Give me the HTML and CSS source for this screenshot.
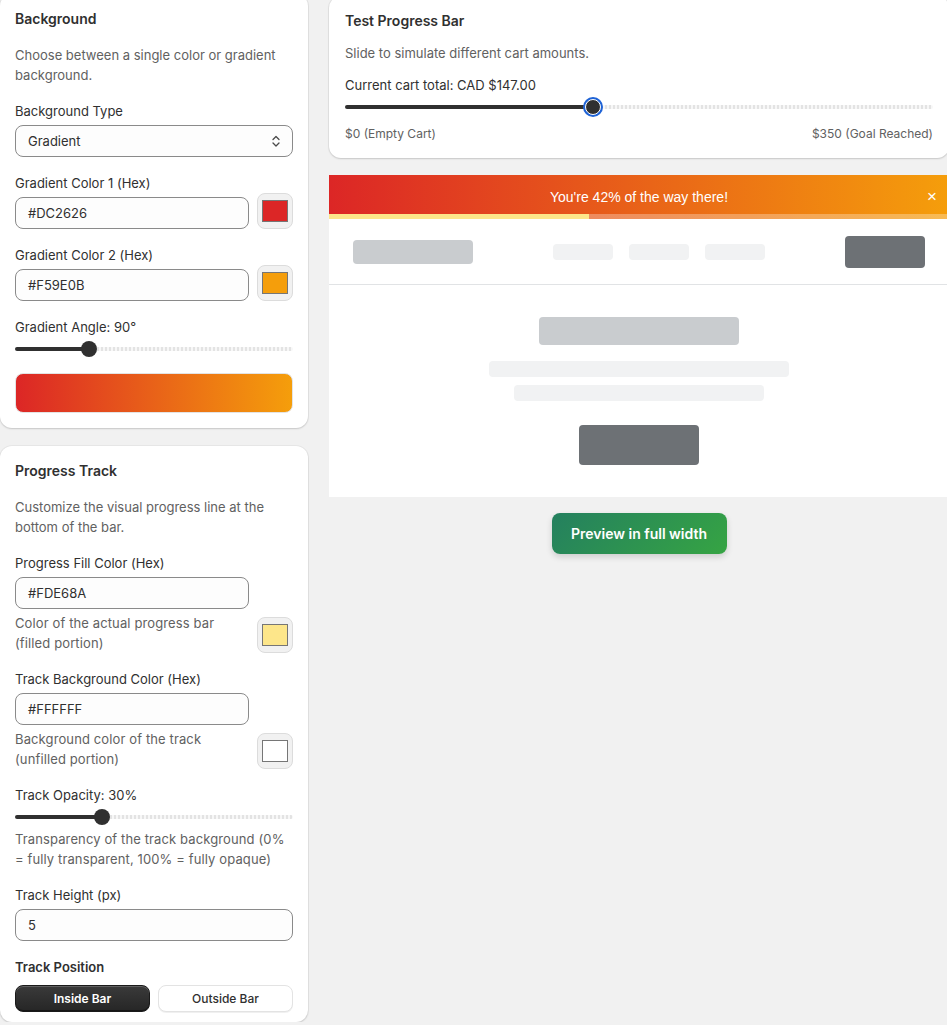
FILE: index.html
```html
<!DOCTYPE html>
<html lang="en">
<head>
<meta charset="utf-8">
<title>Progress Bar Settings</title>
<link rel="stylesheet" href="styles.css">
</head>
<body>
<div class="layout">
  <div class="col-left">
    <section class="card">
      <h2 class="card-title">Background</h2>
      <p class="desc">Choose between a single color or gradient background.</p>
      <div class="field">
        <div class="label">Background Type</div>
        <div class="select">
          <span>Gradient</span>
          <svg class="select-icon" width="16" height="16" viewBox="0 0 16 16" aria-hidden="true"><polyline points="5,6.5 8,3.5 11,6.5" fill="none" stroke="#4a4a4a" stroke-width="1.3" stroke-linecap="round" stroke-linejoin="round"/><polyline points="5,10 8,13 11,10" fill="none" stroke="#4a4a4a" stroke-width="1.3" stroke-linecap="round" stroke-linejoin="round"/></svg>
        </div>
      </div>
      <div class="field-row">
        <div class="field-main">
          <div class="label">Gradient Color 1 (Hex)</div>
          <div class="input">#DC2626</div>
        </div>
        <div class="swatch"><span class="swatch-color" style="--c:#DC2626"></span></div>
      </div>
      <div class="field-row">
        <div class="field-main">
          <div class="label">Gradient Color 2 (Hex)</div>
          <div class="input">#F59E0B</div>
        </div>
        <div class="swatch"><span class="swatch-color" style="--c:#F59E0B"></span></div>
      </div>
      <div class="field">
        <div class="label">Gradient Angle: 90°</div>
        <div class="range" style="--p:0.25">
          <div class="range-fill"></div>
          <div class="range-thumb"></div>
          <div class="range-rest"></div>
        </div>
      </div>
      <div class="gradient-preview"></div>
    </section>

    <section class="card card-2">
      <h2 class="card-title">Progress Track</h2>
      <p class="desc">Customize the visual progress line at the bottom of the bar.</p>
      <div class="field-row">
        <div class="field-main">
          <div class="label">Progress Fill Color (Hex)</div>
          <div class="input">#FDE68A</div>
          <div class="help">Color of the actual progress bar (filled portion)</div>
        </div>
        <div class="swatch"><span class="swatch-color" style="--c:#FDE68A"></span></div>
      </div>
      <div class="field-row">
        <div class="field-main">
          <div class="label">Track Background Color (Hex)</div>
          <div class="input">#FFFFFF</div>
          <div class="help">Background color of the track (unfilled portion)</div>
        </div>
        <div class="swatch"><span class="swatch-color" style="--c:#FFFFFF"></span></div>
      </div>
      <div class="field">
        <div class="label">Track Opacity: 30%</div>
        <div class="range" style="--p:0.3">
          <div class="range-fill"></div>
          <div class="range-thumb"></div>
          <div class="range-rest"></div>
        </div>
        <div class="help">Transparency of the track background (0% = fully transparent, 100% = fully opaque)</div>
      </div>
      <div class="field">
        <div class="label">Track Height (px)</div>
        <div class="input">5</div>
      </div>
      <div class="field field-buttons">
        <div class="label label-strong">Track Position</div>
        <div class="btn-group">
          <button class="btn btn-dark" type="button">Inside Bar</button>
          <button class="btn btn-light" type="button">Outside Bar</button>
        </div>
      </div>
    </section>
  </div>

  <div class="col-right">
    <section class="card test-card">
      <h2 class="card-title">Test Progress Bar</h2>
      <p class="desc">Slide to simulate different cart amounts.</p>
      <div class="label cart-label">Current cart total: CAD $147.00</div>
      <div class="range range-focus" style="--p:0.42">
        <div class="range-fill"></div>
        <div class="range-thumb"></div>
        <div class="range-rest"></div>
      </div>
      <div class="range-labels">
        <span>$0 (Empty Cart)</span>
        <span>$350 (Goal Reached)</span>
      </div>
    </section>

    <div class="preview">
      <div class="announce">
        <span class="announce-text">You're 42% of the way there!</span>
        <span class="announce-close">×</span>
        <div class="announce-track"><div class="announce-fill" style="--p:42%"></div></div>
      </div>
      <div class="mock-header">
        <div class="sk sk-logo"></div>
        <div class="mock-nav">
          <div class="sk sk-nav"></div>
          <div class="sk sk-nav"></div>
          <div class="sk sk-nav"></div>
        </div>
        <div class="sk sk-btn"></div>
      </div>
      <div class="mock-hero">
        <div class="sk sk-title"></div>
        <div class="sk sk-line sk-line-1"></div>
        <div class="sk sk-line sk-line-2"></div>
        <div class="sk sk-cta"></div>
      </div>
    </div>

    <div class="preview-actions">
      <button class="btn-green" type="button">Preview in full width</button>
    </div>
  </div>
</div>
</body>
</html>
```

FILE: styles.css
```css
html, body {
  overflow: hidden;
}
body {
  margin: 0;
  background: #f1f1f1;
  font-family: Inter, "Noto Sans", "Liberation Sans", sans-serif;
  font-size: 13px;
  line-height: 20px;
  color: #303030;
}
.layout {
  display: flex;
  align-items: flex-start;
  gap: 21px;
  margin-top: -6px;
}
.col-left {
  width: 308px;
  flex-shrink: 0;
  display: flex;
  flex-direction: column;
  gap: 18px;
}
.col-right {
  width: 620px;
  flex-shrink: 0;
  padding-top: 2px;
}
.card {
  background: #ffffff;
  border-radius: 12px;
  box-shadow: 0 1px 2px rgba(0, 0, 0, 0.14), 0 0 0 1px rgba(0, 0, 0, 0.04);
  padding: 15px 15px 15px 15px;
  display: flex;
  flex-direction: column;
  gap: 16px;
}
.card-2 {
  padding-bottom: 10px;
}
.card-title {
  margin: 0;
  font-size: 14px;
  line-height: 20px;
  font-weight: 600;
  color: #303030;
}
.desc {
  margin: 0;
  color: #616161;
}
.field {
  display: flex;
  flex-direction: column;
  gap: 4px;
}
.field-buttons {
  gap: 8px;
}
.label {
  color: #303030;
}
.label-strong {
  font-weight: 600;
}
.help {
  color: #616161;
  letter-spacing: 0.12px;
}
.field-row {
  display: flex;
  align-items: flex-end;
  gap: 8px;
}
.field-main {
  flex: 1;
  display: flex;
  flex-direction: column;
  gap: 4px;
}
.input, .select {
  height: 32px;
  box-sizing: border-box;
  border: 1px solid #8a8a8a;
  border-radius: 8px;
  background: #fdfdfd;
  padding: 0 12px;
  display: flex;
  align-items: center;
  color: #303030;
}
.select {
  justify-content: space-between;
  padding-right: 8px;
}
.select-icon {
  display: block;
}
.swatch {
  width: 36px;
  height: 36px;
  box-sizing: border-box;
  flex-shrink: 0;
  border: 1px solid #dcdcdc;
  border-radius: 8px;
  background: #f1f1f1;
  display: flex;
  align-items: center;
  justify-content: center;
}
.swatch-color {
  width: 26px;
  height: 22px;
  box-sizing: border-box;
  border: 1px solid #767676;
  background: var(--c);
}
.range {
  height: 16px;
  display: flex;
  align-items: center;
}
.range-fill {
  width: calc(var(--p) * (100% - 16px) + 8px);
  flex-shrink: 0;
  height: 4px;
  background: #303030;
  border-radius: 2px 0 0 2px;
  margin-right: -8px;
}
.range-thumb {
  width: 16px;
  height: 16px;
  border-radius: 50%;
  background: #303030;
  flex-shrink: 0;
  position: relative;
  z-index: 1;
}
.range-rest {
  flex: 1;
  height: 4px;
  background: repeating-linear-gradient(90deg, #e3e3e3 0 2px, #f7f7f7 2px 4px);
  border-radius: 0 2px 2px 0;
}
.range-focus .range-thumb {
  box-sizing: border-box;
  border: 1px solid #ffffff;
  box-shadow: 0 0 0 2px #1f63d6;
}
.gradient-preview {
  height: 40px;
  border-radius: 8px;
  border: 1px solid #e3e3e3;
  box-sizing: border-box;
  background: linear-gradient(90deg, #DC2626, #F59E0B);
}
.btn-group {
  display: flex;
  gap: 8px;
}
.btn {
  flex: 1;
  height: 27px;
  border-radius: 8px;
  font-family: Inter, "Noto Sans", "Liberation Sans", sans-serif;
  font-size: 12px;
  line-height: 16px;
  padding: 0;
  cursor: pointer;
}
.btn-dark {
  background: linear-gradient(180deg, #3a3a3a, #262626);
  color: #ffffff;
  font-weight: 600;
  border: 1px solid #1a1a1a;
  box-shadow: inset 0 1px 0 rgba(255, 255, 255, 0.2), inset 0 -1px 0 rgba(0, 0, 0, 0.4);
}
.btn-light {
  background: #ffffff;
  color: #303030;
  font-weight: 500;
  border: 1px solid #e3e3e3;
  box-shadow: 0 1px 0 rgba(0, 0, 0, 0.06);
}

/* Test card */
.test-card {
  gap: 12px;
  padding: 15px 16px 14px 16px;
}
.range-focus {
  margin-top: -8px;
}
.range-labels {
  display: flex;
  justify-content: space-between;
  color: #616161;
  font-size: 12px;
  margin-top: -3px;
}

/* Preview */
.preview {
  margin-top: 17px;
  background: #ffffff;
}
.announce {
  position: relative;
  height: 44px;
  background: linear-gradient(90deg, #DC2626, #F59E0B);
  display: flex;
  align-items: center;
  justify-content: center;
  color: #ffffff;
  font-family: "Liberation Sans", Arial, sans-serif;
  font-size: 14px;
}
.announce-close {
  position: absolute;
  right: 12px;
  top: 13px;
  font-size: 17px;
  line-height: 18px;
  font-weight: 400;
}
.announce-track {
  position: absolute;
  left: 0;
  right: 0;
  bottom: 0;
  height: 5px;
  background: rgba(255, 255, 255, 0.3);
}
.announce-fill {
  width: var(--p);
  height: 100%;
  background: #FDE68A;
}
.mock-header {
  height: 66px;
  box-sizing: border-box;
  border-bottom: 1px solid #e1e3e5;
  padding: 0 24px;
  display: flex;
  align-items: center;
  justify-content: space-between;
}
.sk {
  border-radius: 4px;
}
.sk-logo {
  width: 120px;
  height: 24px;
  background: #c9cccf;
}
.mock-nav {
  display: flex;
  gap: 16px;
}
.sk-nav {
  width: 60px;
  height: 16px;
  background: #f1f2f3;
}
.sk-btn {
  width: 80px;
  height: 32px;
  background: #6d7175;
}
.mock-hero {
  padding: 32px 0;
  display: flex;
  flex-direction: column;
  align-items: center;
}
.sk-title {
  width: 200px;
  height: 28px;
  background: #c9cccf;
}
.sk-line {
  height: 16px;
  background: #f1f2f3;
}
.sk-line-1 {
  width: 300px;
  margin-top: 16px;
}
.sk-line-2 {
  width: 250px;
  margin-top: 8px;
}
.sk-cta {
  width: 120px;
  height: 40px;
  margin-top: 24px;
  background: #6d7175;
}
.preview-actions {
  display: flex;
  justify-content: center;
  margin-top: 16px;
}
.btn-green {
  width: 175px;
  height: 41px;
  border: none;
  border-radius: 8px;
  background: linear-gradient(135deg, #24805f, #36a443);
  color: #ffffff;
  font-family: Inter, "Noto Sans", "Liberation Sans", sans-serif;
  font-size: 14px;
  font-weight: 600;
  box-shadow: 0 3px 6px rgba(0, 0, 0, 0.15);
  cursor: pointer;
}
```
